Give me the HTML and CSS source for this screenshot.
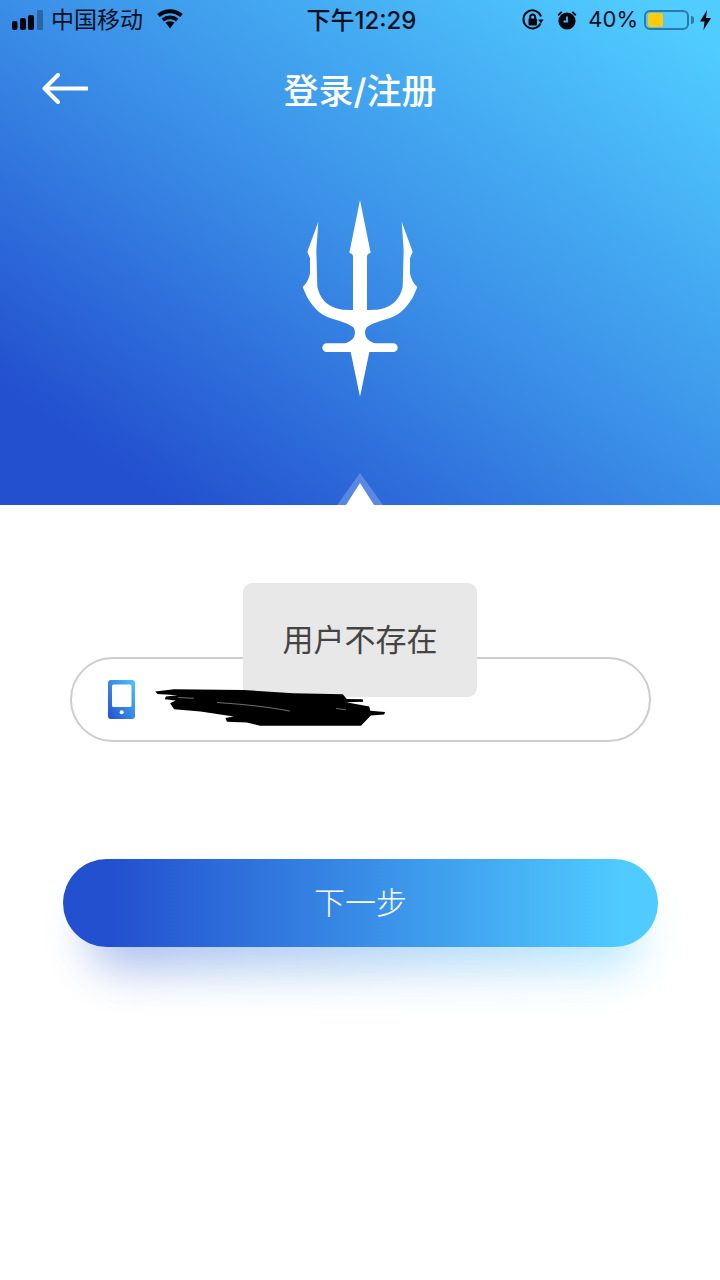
FILE: index.html
```html
<!DOCTYPE html>
<html lang="zh-CN">
<head>
    <meta charset="UTF-8">
    <meta name="viewport" content="width=device-width, initial-scale=1.0">
    <title>登录/注册</title>
    <link rel="stylesheet" href="styles.css">
</head>
<body>
    <div class="page">
        <div class="hero">
            <div class="status-bar">
                <div class="status-left">
                    <svg class="signal" viewBox="0 0 31 20">
                        <rect x="0" y="11" width="5.5" height="9" rx="2"/>
                        <rect x="8" y="8" width="6" height="12" rx="2"/>
                        <rect x="16" y="5" width="6" height="15" rx="2"/>
                        <rect class="signal-off" x="25" y="0" width="6" height="20" rx="1.5"/>
                    </svg>
                    <span class="carrier">中国移动</span>
                    <svg class="wifi" viewBox="0 0 26 20">
                        <path class="wifi-arc" d="M1.5 6.5C8 .8 18 .8 24.500 6.500"/>
                        <path class="wifi-arc" d="M5.800 11C10 7.500 16 7.500 20.200 11"/>
                        <path d="M8.500 13.500C11.300 11.700 14.700 11.700 17.500 13.500L13 19.500Z"/>
                    </svg>
                </div>
                <div class="status-time">下午12:29</div>
                <div class="status-right">
                    <svg class="rotation" viewBox="0 0 22 22">
                        <path class="rotation-ring" d="M18.500 14.500A9 9 0 1 1 19 7.500"/>
                        <path d="M16 10.500h5.500L19 14.500Z"/>
                        <rect x="6.500" y="9.500" width="8.500" height="7" rx="1"/>
                        <path class="rotation-hasp" d="M8.200 10V8a2.500 2.500 0 0 1 5 0v2"/>
                    </svg>
                    <svg class="alarm" viewBox="0 0 20 20">
                        <circle cx="10" cy="11" r="8.600"/>
                        <path class="alarm-hand" d="M10 6.500V11.500H6.500"/>
                        <path d="M.6 4.500 4 1.200 5.500 2.400 1.700 6Z"/>
                        <path d="M19.400 4.500 16 1.200 14.500 2.400 18.300 6Z"/>
                    </svg>
                    <span class="battery-text">40%</span>
                    <div class="battery">
                        <div class="battery-level"></div>
                    </div>
                    <div class="battery-nub"></div>
                    <svg class="bolt" viewBox="0 0 11 20">
                        <path d="M7 0 0 11.500H4.500L3.500 20 11 8H6Z"/>
                    </svg>
                </div>
            </div>

            <div class="nav">
                <svg class="back" viewBox="0 0 46 32">
                    <path d="M45 15.500H3M16 2 2.500 15.500 16 29"/>
                </svg>
                <h1 class="title">登录/注册</h1>
            </div>

            <svg class="trident" viewBox="0 0 480 660">
                <path d="M240 30 272 189C265 190 261 194 261 200V360C275 360 288 360 300 358 340 350 360 325 368 291L371 180 365 95 398 185 390 205V250C394 270 402 282 412 291L399 321C385 345 365 372 330 384 305 392 275 400 260 412 254 420 254 432 258 440 264 452 278 460 292 460H340A13 13 0 0 1 340 486H268L240 620 212 486H140A13 13 0 0 1 140 460H188C202 460 216 452 222 440 226 432 226 420 220 412 205 400 175 392 150 384 115 372 95 345 81 321L68 291C78 282 86 270 90 250V205L82 185 115 95 109 180 112 291C120 325 140 350 180 358 192 360 205 360 219 360V200C219 194 215 190 208 189Z"/>
            </svg>
        </div>

        <div class="form">
            <div class="phone-field">
                <svg class="phone-icon" viewBox="0 0 27 39">
                    <defs>
                        <linearGradient id="phoneFill" x1="0" y1="1" x2="1" y2="0">
                            <stop offset="0" stop-color="#2350cf"/>
                            <stop offset="1" stop-color="#4fc4fb"/>
                        </linearGradient>
                    </defs>
                    <rect width="27" height="39" rx="3" fill="url(#phoneFill)"/>
                    <rect x="4" y="4.500" width="19.500" height="22.500" rx="1.500" fill="#fff"/>
                    <circle cx="13.700" cy="32.300" r="2" fill="#fff"/>
                </svg>
                <svg class="scribble" viewBox="270 105 720 130">
                    <path d="M283 125 340 118 550 120 700 130 850 133 862 147 910 148 912 156 860 157 930 170 933 183 978 187 975 194 935 197 905 228H600L560 218 500 216 495 205 520 200 420 185 340 178 328 160 345 152 312 148 315 140 350 136 290 132Z"/>
                    <path class="scribble-gap" d="M352 143 400 145M470 158C560 164 630 172 690 184M830 176 860 180"/>
                </svg>
            </div>
            <button class="next-btn">下一步</button>
        </div>

        <div class="toast">用户不存在</div>
    </div>
</body>
</html>
```

FILE: styles.css
```css
body {
    margin: 0;
    background: #fff;
    font-family: Inter, "Noto Sans CJK SC", sans-serif;
}
.page {
    position: relative;
    isolation: isolate;
    width: 720px;
    height: 1280px;
    overflow: hidden;
    background: #fff;
}
.hero {
    position: relative;
    height: 505px;
    background: linear-gradient(to top right, #2350cf 12%, #3a8ee7 50%, #50ccff 95%);
}
.hero::before,
.hero::after {
    content: "";
    position: absolute;
    bottom: 0;
    left: 50%;
    transform: translateX(-50%);
    clip-path: polygon(50% 0, 100% 100%, 0 100%);
}
.hero::before {
    width: 46px;
    height: 32px;
    background: rgba(255,255,255,0.22);
}
.hero::after {
    width: 28px;
    height: 22px;
    background: #fff;
}
.status-bar {
    display: grid;
    grid-template-columns: 1fr auto 1fr;
    align-items: center;
    height: 40px;
    color: #0a0f1e;
    font-size: 23px;
}
.status-left {
    display: flex;
    align-items: center;
    padding-left: 12px;
}
.signal {
    width: 31px;
    height: 20px;
    fill: #05070f;
}
.signal-off {
    opacity: 0.3;
}
.carrier {
    margin: 0 0 5px 8px;
}
.wifi {
    width: 26px;
    height: 20px;
    margin: 0 0 2px 14px;
    fill: #05070f;
}
.wifi-arc {
    fill: none;
    stroke: #05070f;
    stroke-width: 3.8;
}
.status-time {
    margin: 0 0 4px 3px;
    font-weight: 500;
    font-size: 24px;
}
.status-right {
    display: flex;
    align-items: center;
    justify-content: flex-end;
}
.rotation {
    width: 22px;
    height: 22px;
    fill: #05070f;
}
.rotation-ring,
.rotation-hasp {
    fill: none;
    stroke: #05070f;
    stroke-width: 2;
}
.alarm {
    width: 20px;
    height: 20px;
    margin-left: 13px;
    fill: #05070f;
}
.alarm-hand {
    fill: none;
    stroke: #4ab4f6;
    stroke-width: 1.8;
}
.battery-text {
    margin: 0 0 2px 11px;
    font-size: 22px;
}
.battery {
    box-sizing: border-box;
    width: 45px;
    height: 20px;
    margin-left: 6px;
    padding: 1px 2px;
    border: 2px solid #2a7ba8;
    border-radius: 6px;
}
.battery-level {
    width: 15px;
    height: 100%;
    background: #fdca0c;
    border-radius: 2px;
}
.battery-nub {
    width: 3px;
    height: 8px;
    margin-left: 2px;
    background: #2a7ba8;
    border-radius: 0 3px 3px 0;
}
.bolt {
    width: 11px;
    height: 20px;
    margin: 0 9px 0 6px;
    fill: #05070f;
}
.nav {
    display: grid;
    grid-template-columns: 1fr auto 1fr;
    align-items: center;
    height: 104px;
}
.back {
    width: 46px;
    height: 32px;
    margin: 0 0 7px 42px;
    fill: none;
    stroke: #fff;
    stroke-width: 4;
    stroke-linecap: round;
    stroke-linejoin: round;
}
.title {
    grid-column: 2;
    margin: 0 0 8px;
    color: #fff;
    font-size: 35px;
    font-weight: 500;
}
.trident {
    display: block;
    width: 160px;
    height: 220px;
    margin: 46px auto 0;
    fill: #fff;
}
.form {
    padding: 152px 62px 0 63px;
}
.phone-field {
    box-sizing: border-box;
    display: flex;
    align-items: center;
    height: 85px;
    margin: 0 7px;
    padding-left: 36px;
    border: 2px solid #cdcdcd;
    border-radius: 43px;
}
.phone-icon {
    width: 27px;
    height: 39px;
}
/* the scribble is painted over the toast, as in the screenshot */
.scribble {
    position: relative;
    z-index: 2;
    width: 240px;
    height: 43px;
    margin: 13px 0 0 15px;
    fill: #000;
}
.scribble-gap {
    fill: none;
    stroke: #e4e4e4;
    stroke-width: 1.5;
}
.next-btn {
    position: relative;
    display: block;
    width: 595px;
    height: 88px;
    margin-top: 117px;
    padding: 0 0 6px;
    border: none;
    border-radius: 44px;
    background: linear-gradient(to right, #2350cf 8%, #4fcbff 94%);
    color: #fff;
    font-family: inherit;
    font-size: 31px;
    font-weight: 300;
}
.next-btn::before {
    content: "";
    position: absolute;
    top: 36px;
    left: 24px;
    right: 16px;
    height: 76px;
    z-index: -1;
    border-radius: 38px;
    background: linear-gradient(to right, #2350cf, #4fcbff);
    filter: blur(22px);
    opacity: 0.36;
}
.toast {
    box-sizing: border-box;
    position: absolute;
    top: 583px;
    left: 243px;
    z-index: 1;
    width: 234px;
    height: 114px;
    padding-bottom: 6px;
    display: flex;
    align-items: center;
    justify-content: center;
    background: #e8e8e8;
    border-radius: 9px;
    color: #444;
    font-size: 31px;
}
```
